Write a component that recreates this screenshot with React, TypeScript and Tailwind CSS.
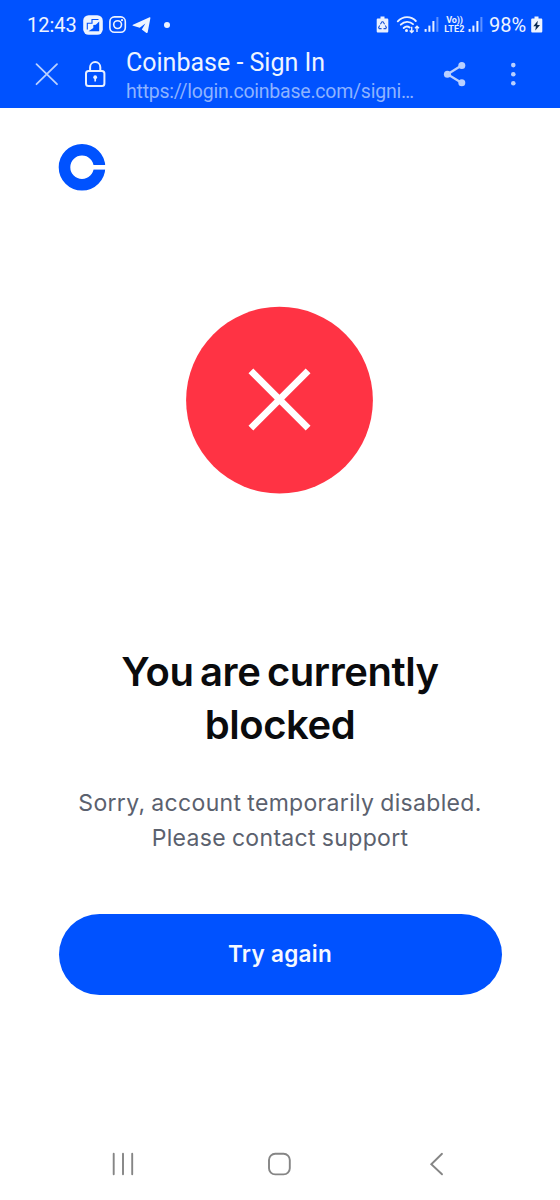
import type { ReactNode } from "react";

type IconProps = {
  width: number;
  height: number;
  className?: string;
  children: ReactNode;
};

const Icon = ({ width, height, className, children }: IconProps) => (
  <svg
    width={width}
    height={height}
    viewBox={`0 0 ${width} ${height}`}
    fill="none"
    className={`shrink-0 ${className ?? ""}`}
    aria-hidden="true"
  >
    {children}
  </svg>
);

const SignalIcon = ({ className }: { className?: string }) => (
  <Icon width={15} height={18} className={className}>
    <g fill="#e9f0ff">
      <rect x="0.6" y="13" width="2" height="2.8" />
      <rect x="4.4" y="9.6" width="2" height="6.2" />
      <rect x="8.4" y="5" width="2" height="10.8" />
      <rect x="12.4" y="1" width="2" height="14.8" opacity="0.4" />
    </g>
  </Icon>
);

const StatusBar = () => (
  <div className="flex h-[47px] items-center pt-[3px] pl-[27px] text-[20px] leading-[50px] text-[#eef4ff]">
    <span className="w-14">12:43</span>
    <Icon width={20} height={20}>
      <rect x="0.2" y="0.2" width="19.6" height="19.6" rx="5.5" fill="#eef4ff" />
      <path d="M15.5 4.5H9V8.3H4.300V14.500" stroke="#0052ff" strokeWidth="1.1" />
      <path d="M16.200 6.500v9.800H5.500l4.800-3.300V10l2.500-.2Z" fill="#0052ff" />
    </Icon>
    <Icon width={18} height={18} className="ml-1.5">
      <rect x="0.9" y="0.9" width="15.4" height="15.4" rx="4.5" stroke="#eef4ff" strokeWidth="1.6" />
      <circle cx="8.6" cy="8.6" r="3.9" stroke="#eef4ff" strokeWidth="1.6" />
      <circle cx="13" cy="4.2" r="1.1" fill="#eef4ff" />
    </Icon>
    <Icon width={19} height={18} className="ml-[5px]">
      <path
        d="M1 8.8 17.600 1.200c.5-.2.9.1.8.7l-2.700 14.400c-.2.8-.7 1-1.300.6l-4.600-3.500 3.600-5.800-5.700 4.200-6.600-2.100c-.8-.2-.8-.6-.1-.9Z"
        fill="#eef4ff"
      />
    </Icon>
    <span className="ml-[13px] size-1.5 rounded-full bg-[#eef4ff]" />

    <div className="mr-[17px] ml-auto flex items-center">
      <Icon width={13} height={18}>
        <path
          d="M4.500.5h4v2H11c.8 0 1.300.5 1.300 1.300v11.400c0 .8-.5 1.300-1.300 1.300H2c-.8 0-1.300-.5-1.300-1.300V3.800c0-.8.5-1.300 1.300-1.300h2.500Z"
          fill="#e9f0ff"
        />
        <path
          d="M4.400 8.200 6 5.700h1l1.600 2.500M9.300 9.400l1.100 2-.6 1.200H7.500M5.600 12.600H3.200l-.6-1.200 1.100-2"
          stroke="#1c55d8"
          strokeWidth="1.100"
        />
      </Icon>
      <Icon width={24} height={18} className="ml-[7px]">
        <g stroke="#e9f0ff" strokeWidth="1.900" strokeLinecap="round">
          <path d="M1.800 5.300C7-.2 15-.2 19.800 5" />
          <path d="M4.800 8.700c3.700-3.700 8.800-3.700 12.200-.6" />
          <path d="M7.700 12c1.900-1.900 4.200-1.900 6-.5" />
        </g>
        <circle cx="10.500" cy="14.600" r="1.500" fill="#e9f0ff" />
        <path
          d="M15.700 10.800v5.700m-2-2 2 2 2-2M21 16v-5.800m-2 2 2-2 2 2"
          stroke="#e9f0ff"
          strokeWidth="1.400"
        />
      </Icon>
      <SignalIcon className="ml-1" />
      <div className="ml-[5px] flex w-[21px] flex-col items-center text-[9px] leading-[9px] font-bold text-[#e9f0ff]">
        <span className="tracking-[-0.2px]">Vo))</span>
        <span className="tracking-[0.2px]">LTE2</span>
      </div>
      <SignalIcon className="ml-[3px]" />
      <span className="ml-1.5 w-[39px]">98%</span>
      <Icon width={12} height={18} className="ml-[3px]">
        <path
          d="M3.500.5h4v2H10c.8 0 1.300.5 1.300 1.300v11.400c0 .8-.5 1.300-1.300 1.300H1.500c-.8 0-1.300-.5-1.300-1.300V3.800c0-.8.5-1.300 1.300-1.300h2Z"
          fill="#eef4ff"
        />
        <path d="M6.800 4.800 2.300 10.200h2.600l-.6 4.300 4.700-5.600H6.200Z" fill="#0b2a52" />
      </Icon>
    </div>
  </div>
);

const BrowserBar = () => (
  <div className="flex h-[61px] pl-[35px]">
    <Icon width={24} height={24} className="mt-[15px]">
      <path d="M1.500 2.200 22 22.200M22 2.200 1.500 22.200" stroke="#b9d0ff" strokeWidth="1.800" strokeLinecap="round" />
    </Icon>
    <Icon width={22} height={28} className="mt-[13px] ml-[25px]">
      <rect x="2" y="10.900" width="18.400" height="15" rx="2.500" stroke="#e9f0ff" strokeWidth="2" />
      <path d="M6.100 10.500V7.200a5.100 5.100 0 0 1 10.200 0v3.300" stroke="#e9f0ff" strokeWidth="2" />
      <circle cx="11.200" cy="17.200" r="1.900" fill="#e9f0ff" />
      <path d="M11.200 17v4.500" stroke="#e9f0ff" strokeWidth="1.700" />
    </Icon>
    <div className="ml-5 w-[300px] whitespace-nowrap">
      <div className="text-[25px] leading-[31px] text-[#eef4ff]">Coinbase - Sign In</div>
      <div className="text-[19.5px] leading-[27px] tracking-[-0.23px] text-[#8db3ff]">
        https://login.coinbase.com/signi…
      </div>
    </div>
    <Icon width={24} height={26} className="mt-[14px] ml-[17px]">
      <path d="M18.500 4.500 4.500 13.300l14 8.500" stroke="#b9d0ff" strokeWidth="2.200" />
      <g fill="#b9d0ff">
        <circle cx="18.800" cy="4.600" r="3.500" />
        <circle cx="4.400" cy="13.200" r="3.500" />
        <circle cx="18.800" cy="21.700" r="3.500" />
      </g>
    </Icon>
    <Icon width={8} height={24} className="mt-[15px] ml-[42px]">
      <g fill="#b9d0ff">
        <circle cx="4.300" cy="3.100" r="2.300" />
        <circle cx="4.300" cy="12.200" r="2.300" />
        <circle cx="4.300" cy="21.300" r="2.300" />
      </g>
    </Icon>
  </div>
);

const CoinbaseLogo = () => (
  <Icon width={48} height={48}>
    <circle cx="24" cy="24.300" r="17.500" stroke="#0052ff" strokeWidth="11.600" />
    <path d="M33 24.300h15" stroke="#fff" strokeWidth="4.600" />
  </Icon>
);

const NavigationBar = () => (
  <nav className="flex h-[72px] items-center pl-[111px]">
    <Icon width={24} height={24}>
      <path d="M2.700 1.800v20.400M12 1.800v20.400M21.200 1.800v20.400" stroke="#858585" strokeWidth="1.900" strokeLinecap="round" />
    </Icon>
    <Icon width={25} height={24} className="ml-[132px]">
      <rect x="2" y="1.800" width="20.800" height="20.600" rx="6.200" stroke="#858585" strokeWidth="1.900" />
    </Icon>
    <Icon width={15} height={24} className="ml-[137px]">
      <path d="M13 1.800 2.300 12.200 13 22.300" stroke="#858585" strokeWidth="1.900" strokeLinecap="round" />
    </Icon>
  </nav>
);

const App = () => (
  <div className="flex h-[1200px] w-[560px] flex-col overflow-hidden bg-white font-['Inter',sans-serif]">
    <header className="h-[108px] shrink-0 bg-[#0052ff] font-['Roboto',sans-serif]">
      <StatusBar />
      <BrowserBar />
    </header>

    <main className="flex-1 pt-[35px]">
      <div className="pl-[58px]">
        <CoinbaseLogo />
      </div>
      <Icon width={188} height={188} className="mt-[115px] ml-[186px]">
        <circle cx="93.500" cy="94.200" r="93.400" fill="#ff3344" />
        <path d="m64.900 64.900 57.200 57.200M122.100 64.900l-57.200 57.200" stroke="#fff" strokeWidth="6.800" />
      </Icon>
      <h1 className="mt-[152px] text-center text-[40px] leading-[52.5px] font-semibold tracking-[-0.45px] text-[#0a0b0d] [word-spacing:-3px]">
        You are currently
        <br />
        blocked
      </h1>
      <p className="mt-[35px] text-center text-[23px] leading-[35px] tracking-[0.32px] text-[#5b616e] [word-spacing:-0.8px]">
        Sorry, account temporarily disabled.
        <br />
        Please contact support
      </p>
      <button className="mt-[57.5px] ml-[58.5px] block h-[81px] w-[443px] rounded-full bg-[#0052ff] text-[22.5px] font-semibold tracking-[0.3px] text-[#f5f8ff]">
        Try again
      </button>
    </main>

    <NavigationBar />
  </div>
);

export default App;
